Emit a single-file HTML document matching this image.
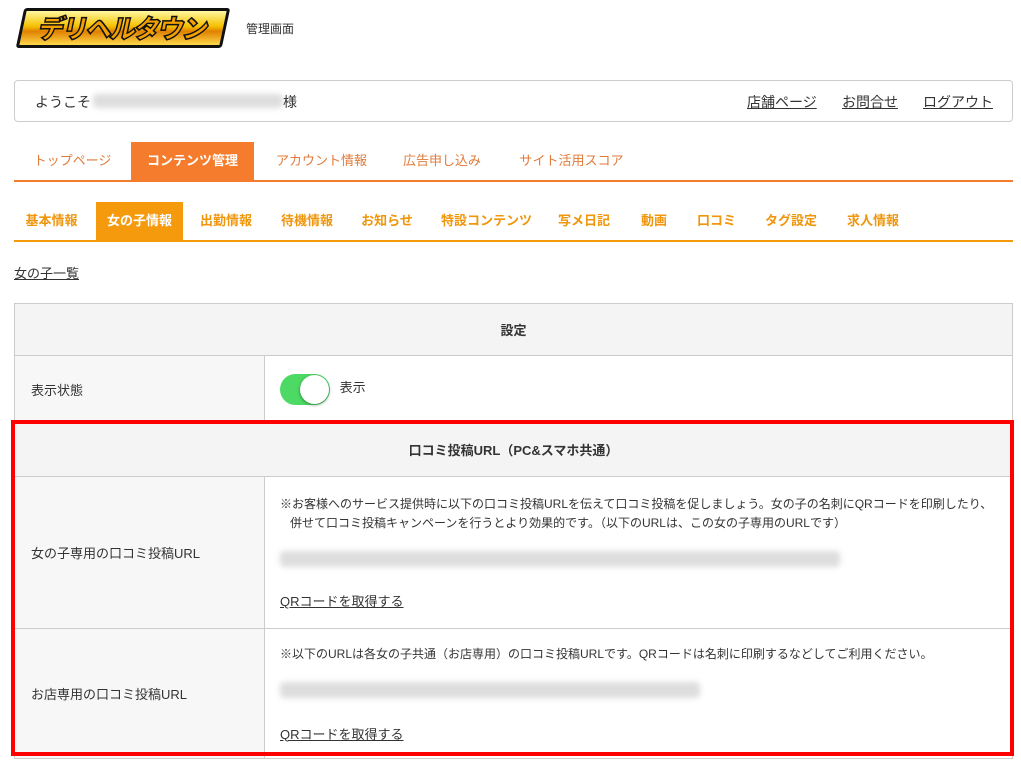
<!DOCTYPE html>
<html><head><meta charset="utf-8"><style>
*{box-sizing:border-box;margin:0;padding:0}
body{width:1021px;height:762px;overflow:hidden;background:#fff;font-family:"Liberation Sans","Noto Sans CJK JP",sans-serif;color:#333;font-size:13px;position:relative}
.abs{position:absolute}
.logo{left:20px;top:8px;width:206px;height:40px;transform:skewX(-12deg);background:linear-gradient(#fff8a0,#f6c000 45%,#e08000 60%,#ffd84a);border:3px solid #111;border-radius:3px;font:900 26px/34px "Noto Sans CJK JP",sans-serif;color:#f3a000;letter-spacing:-2px;text-align:center;-webkit-text-stroke:1.5px #111;text-shadow:0 0 0 #111}
.welcome{left:14px;top:80px;width:999px;height:42px;border:1px solid #ccc;border-radius:4px}
a{color:#333}
.tabs1{left:14px;top:142px;width:999px;height:40px;border-bottom:2px solid #f47c2c}
.t{position:absolute;top:0;height:38px;line-height:38px;font-size:13px;color:#e07a3a;text-align:center}
.tabs2{left:14px;top:202px;width:999px;height:40px;border-bottom:2px solid #f59a0c}
.s{position:absolute;top:0;height:38px;line-height:38px;font-size:13px;color:#f0960c;font-weight:bold;text-align:center}
table{position:absolute;left:14px;top:303px;width:999px;border-collapse:collapse}
td{border:1px solid #ccc;font-size:13px;vertical-align:middle}
.h{background:#f4f4f4;text-align:center;font-weight:bold}
.l{width:250px;padding-left:16px;background:#f7f7f7}
.r{padding-left:15px}
.blur{height:16px;background:#ddd;filter:blur(3px);border-radius:4px}
.sm{font-size:12px;line-height:19px}
</style></head><body>
<div class="abs logo">デリヘルタウン</div>
<div class="abs" style="left:246px;top:20px;font-size:12px">管理画面</div>
<div class="abs welcome">
 <div class="abs" style="left:20px;top:11px;font-size:14px">ようこそ</div>
 <div class="abs blur" style="left:78px;top:13px;width:190px;height:14px"></div>
 <div class="abs" style="left:268px;top:11px;font-size:14px">様</div>
 <div class="abs" style="left:732px;top:11px;font-size:14px"><a href="#">店舗ページ</a></div>
 <div class="abs" style="left:827px;top:11px;font-size:14px"><a href="#">お問合せ</a></div>
 <div class="abs" style="left:908px;top:11px;font-size:14px"><a href="#">ログアウト</a></div>
</div>
<div class="abs tabs1">
 <div class="t" style="left:0;width:117px">トップページ</div>
 <div class="t" style="left:117px;width:123px;background:#f47c2c;color:#fff;font-weight:bold">コンテンツ管理</div>
 <div class="t" style="left:250px;width:115px">アカウント情報</div>
 <div class="t" style="left:378px;width:100px">広告申し込み</div>
 <div class="t" style="left:495px;width:125px">サイト活用スコア</div>
</div>
<div class="abs tabs2">
 <div class="s" style="left:0;width:75px">基本情報</div>
 <div class="s" style="left:82px;width:87px;background:#f59a0c;color:#fff">女の子情報</div>
 <div class="s" style="left:176px;width:72px">出勤情報</div>
 <div class="s" style="left:257px;width:72px">待機情報</div>
 <div class="s" style="left:340px;width:66px">お知らせ</div>
 <div class="s" style="left:420px;width:105px">特設コンテンツ</div>
 <div class="s" style="left:536px;width:68px">写メ日記</div>
 <div class="s" style="left:617px;width:46px">動画</div>
 <div class="s" style="left:675px;width:55px">口コミ</div>
 <div class="s" style="left:742px;width:70px">タグ設定</div>
 <div class="s" style="left:824px;width:70px">求人情報</div>
</div>
<div class="abs" style="left:14px;top:263px;font-size:13px"><a href="#">女の子一覧</a></div>
<table>
<tr><td class="h" colspan="2" style="height:52px">設定</td></tr>
<tr><td class="l" style="height:67px;background:#f7f7f7">表示状態</td><td class="r"><span style="display:inline-block;vertical-align:middle;width:50px;height:31px;border-radius:16px;background:#4cd964;position:relative"><span style="position:absolute;right:1px;top:1px;width:29px;height:29px;border-radius:50%;background:#fff;box-shadow:0 1px 3px rgba(0,0,0,.4)"></span></span> <span style="margin-left:6px">表示</span></td></tr>
<tr><td class="h" colspan="2" style="height:54px">口コミ投稿URL（PC&amp;スマホ共通）</td></tr>
<tr><td class="l" style="height:152px">女の子専用の口コミ投稿URL</td><td class="r">
 <div class="sm" style="padding-top:0">※お客様へのサービス提供時に以下の口コミ投稿URLを伝えて口コミ投稿を促しましょう。女の子の名刺にQRコードを印刷したり、<br>&nbsp;&nbsp;&nbsp;併せて口コミ投稿キャンペーンを行うとより効果的です。（以下のURLは、この女の子専用のURLです）</div>
 <div class="blur" style="width:560px;margin-top:18px"></div>
 <div style="margin-top:24px"><a href="#">QRコードを取得する</a></div></td></tr>
<tr><td class="l" style="height:130px">お店専用の口コミ投稿URL</td><td class="r">
 <div class="sm">※以下のURLは各女の子共通（お店専用）の口コミ投稿URLです。QRコードは名刺に印刷するなどしてご利用ください。</div>
 <div class="blur" style="width:420px;margin-top:18px"></div>
 <div style="margin-top:26px"><a href="#">QRコードを取得する</a></div></td></tr>
</table>
<div class="abs" style="left:11px;top:420px;width:1003px;height:336px;border:4px solid #f00"></div>
</body></html>
